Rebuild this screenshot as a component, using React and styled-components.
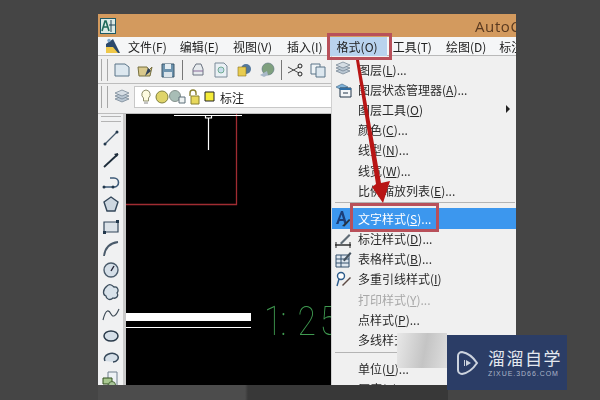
import React from 'react';
import styled, { createGlobalStyle } from 'styled-components';

const GlobalStyle = createGlobalStyle`
  html, body { margin: 0; padding: 0; background: #454545; }
  body { font-family: "Noto Sans CJK SC", "Liberation Sans", sans-serif; }
`;

const Page = styled.div`
  position: relative;
  width: 600px;
  height: 400px;
  overflow: hidden;
  background: #454545;
  padding: 14px 0 0 98px;
  box-sizing: border-box;
`;

const Win = styled.div`
  position: relative;
  width: 418px;
  height: 371px;
  display: flex;
  flex-direction: column;
  overflow: hidden;
  background: #f0f0f0;
  filter: blur(0.4px);
`;

const TitleBar = styled.div`
  height: 23px;
  flex: none;
  display: flex;
  align-items: center;
  background: #d39a5e;
  padding-left: 2px;
  white-space: nowrap;
`;

const TitleText = styled.div`
  margin-left: 359px;
  font: 15px "Open Sans", sans-serif;
  letter-spacing: 0.6px;
  color: #5a3a20;
`;

const MenuBar = styled.div`
  height: 19px;
  flex: none;
  display: flex;
  align-items: center;
  background: #f5f6f7;
  border-bottom: 1px solid #b9b9b9;
  box-sizing: border-box;
  padding-left: 7px;
  white-space: nowrap;
`;

const TopItem = styled.div`
  font-size: 12px;
  line-height: 19px;
  color: #222;
  margin-left: ${(p) => p.$gap}px;
  padding: 0 ${(p) => (p.$open ? '9px 0 7px' : '0')};
  background: ${(p) => (p.$open ? '#b9d3ee' : 'transparent')};
`;

const ToolRow = styled.div`
  height: ${(p) => p.$h}px;
  flex: none;
  display: flex;
  align-items: center;
  background: #f0f0f0;
  border-bottom: 1px solid #bdbdbd;
  padding-bottom: ${(p) => p.$pb || 0}px;
  box-sizing: border-box;
`;

const Grip = styled.div`
  width: 5px;
  height: 22px;
  margin: 0 4px 0 3px;
  border-left: 1px solid #a8a8a8;
  border-right: 1px solid #a8a8a8;
  flex: none;
`;

const ToolIcon = styled.div`
  width: ${(p) => p.$w || 23}px;
  height: 18px;
  flex: none;
  display: flex;
  align-items: center;
  justify-content: center;
`;

const Sep = styled.div`
  width: 1px;
  height: 20px;
  background: #777;
  margin: 0 ${(p) => p.$m || 5}px;
  flex: none;
`;

const LayerCombo = styled.div`
  flex: none;
  width: 198px;
  height: 22px;
  margin-left: 2px;
  background: #fff;
  border: 1px solid #c8c8c8;
  box-sizing: border-box;
  display: flex;
  align-items: center;
  padding-left: 6px;
  font-size: 12px;
  color: #222;
`;

const LayerName = styled.span`
  margin-left: 5px;
`;

const Body = styled.div`
  flex: 1;
  display: flex;
  min-height: 0;
`;

const LeftBar = styled.div`
  width: 25px;
  flex: none;
  background: #f0f1f2;
  border-right: 3px solid #c9c9c9;
  display: flex;
  flex-direction: column;
  align-items: center;
  padding-top: 2px;
  gap: 4px;
`;

const LeftGrip = styled.div`
  width: 20px;
  height: 4px;
  margin-bottom: 2px;
  border-top: 1px solid #b4b4b4;
  border-bottom: 1px solid #b4b4b4;
  flex: none;
`;

const LeftTool = styled.div`
  width: 18px;
  height: 18px;
  flex: none;
`;

const Canvas = styled.svg`
  flex: 1;
  display: block;
  background: #000;
  min-width: 0;
`;

const Menu = styled.div`
  position: absolute;
  left: 233px;
  top: 42px;
  width: 185px;
  height: 329px;
  background: #f0f0f0;
  border-left: 1px solid #d0d0d0;
  box-sizing: border-box;
  padding-top: 3px;
  overflow: hidden;
`;

const Row = styled.div`
  position: relative;
  height: 20.2px;
  flex: none;
  display: flex;
  align-items: center;
  padding-left: 26px;
  font-size: 12px;
  white-space: nowrap;
  color: ${(p) => (p.$active ? '#fff' : p.$off ? '#a8a8a8' : '#2a2a2a')};
  background: ${(p) => (p.$active ? '#3c97ee' : 'transparent')};
`;

const RowIcon = styled.svg`
  position: absolute;
  left: 3px;
  top: 2px;
  width: 17px;
  height: 17px;
`;

const Caret = styled.div`
  position: absolute;
  right: 6px;
  top: 6px;
  border-left: 4px solid #222;
  border-top: 4px solid transparent;
  border-bottom: 4px solid transparent;
`;

const Hr = styled.div`
  height: 1px;
  margin: ${(p) => p.$m};
  background: #b4b4b4;
`;

const Mark = styled.div`
  position: absolute;
  left: ${(p) => p.$x}px;
  top: ${(p) => p.$y}px;
  width: ${(p) => p.$w}px;
  height: ${(p) => p.$h}px;
  border: 3px solid #b8505a;
  box-sizing: border-box;
`;

const Arrow = styled.svg`
  position: absolute;
  left: 0;
  top: 0;
  width: 600px;
  height: 400px;
`;

const Fade = styled.div`
  position: absolute;
  left: 397px;
  top: 333px;
  width: 50px;
  height: 35px;
  background: linear-gradient(100deg, #e8e8e8, #c4c4c4 55%, #dedede);
`;

const Badge = styled.div`
  position: absolute;
  left: 447px;
  top: 335px;
  width: 120px;
  height: 55px;
  background: #2b3d66;
  display: flex;
  align-items: center;
  padding-left: 8px;
  box-sizing: border-box;
  gap: 7px;
  color: #e4e8ef;
`;

const BadgeText = styled.div`
  display: flex;
  flex-direction: column;
`;

const BadgeName = styled.div`
  font-size: 17px;
  line-height: 22px;
  font-weight: 400;
  letter-spacing: 1.5px;
  white-space: nowrap;
`;

const BadgeUrl = styled.div`
  font: 7px/9px "Liberation Sans", sans-serif;
  letter-spacing: 0.95px;
  color: #aab4c6;
  white-space: nowrap;
`;

const Foot = styled.div`
  position: absolute;
  left: 98px;
  top: 385px;
  width: 350px;
  height: 15px;
  background: linear-gradient(90deg, #4c4c4c 0 147px, #383838 150px);
`;

const Hot = styled.span`
  text-decoration: underline;
  text-underline-offset: 1px;
`;

const IconSvg = styled.svg`
  flex: none;
  display: block;
`;

const Svg = ({ children, w = 16, h = 16 }) => (
  <IconSvg width={w} height={h} viewBox={`0 0 ${w} ${h}`}>{children}</IconSvg>
);

const Layers = () => (
  <g fill="#b9c6d2" stroke="#6d7d8c" strokeWidth="0.7">
    <path d="M1 10l7-3 7 3-7 3z" />
    <path d="M1 7l7-3 7 3-7 3z" />
    <path d="M1 4l7-3 7 3-7 3z" fill="#d5dde4" />
  </g>
);

const top = [
  ['文件(F)', 7],
  ['编辑(E)', 13],
  ['视图(V)', 14],
  ['插入(I)', 15],
];

const leftIcons = [
  <g><path d="M3 15L15 3" stroke="#45596c" strokeWidth="1.300" /><circle cx="3" cy="15" r="1.500" fill="#22384c" /><circle cx="15" cy="3" r="1.500" fill="#22384c" /></g>,
  <g><path d="M2 16L16 3" stroke="#1d2c3a" strokeWidth="1.800" /><path d="M16 2l-4 1 3 3z" fill="#1d2c3a" /></g>,
  <g><path d="M2 14h10a4 4 0 0 0 0-9H8" stroke="#3d5a78" strokeWidth="1.600" fill="none" /><circle cx="2" cy="14" r="1.500" fill="#22384c" /><circle cx="11" cy="14" r="1.500" fill="#22384c" /></g>,
  <path d="M9 2l7 5-3 9H5L2 7z" stroke="#33475a" strokeWidth="1.400" fill="#cdd7e0" />,
  <g><path d="M2 5h14v10H2z" stroke="#33475a" strokeWidth="1.200" fill="#dbe2e8" /><rect x="14" y="3" width="3" height="3" fill="#22384c" /><rect x="1" y="14" width="3" height="3" fill="#22384c" /></g>,
  <path d="M2 17C3 9 8 4 16 3" stroke="#4a5b6b" strokeWidth="1.800" fill="none" />,
  <g><circle cx="9" cy="9" r="7" stroke="#4a5b6b" strokeWidth="1.400" fill="#d5dfe8" /><path d="M9 10l3-5" stroke="#223" strokeWidth="1.400" /></g>,
  <path d="M5 3c3-3 6 0 7 1 4-1 5 4 3 6 2 3-1 6-4 5-3 3-7 1-7-2-3-1-4-6 1-10z" stroke="#3a4c5c" strokeWidth="1.300" fill="#d8e2ea" />,
  <path d="M1 15C4 3 7 5 9 9s5 2 8-5" stroke="#3a4753" strokeWidth="1.100" fill="none" />,
  <ellipse cx="9" cy="9" rx="7" ry="5" stroke="#2a3b4b" strokeWidth="1.500" fill="#d5dfe8" />,
  <path d="M3 12C0 6 10 2 15 6c3 3 0 7-4 7" stroke="#35485a" strokeWidth="1.500" fill="#d5dfe8" />,
  <g><path d="M6 1h9v14H6z" fill="#eef2f5" stroke="#70808e" /><path d="M1 7h9v6H1z" fill="#a8c890" stroke="#33511f" /><circle cx="10" cy="14" r="3.500" fill="#a9c59a" stroke="#4c6a3c" /></g>,
];

const rows = [
  { label: '图层', hot: 'L', tail: '...', icon: <Layers /> },
  { label: '图层状态管理器', hot: 'A', tail: '...', icon: <g><path d="M1 6l6-3 6 3-6 3z" fill="#7fb2d8" stroke="#47708f" strokeWidth=".7" /><path d="M5 7h11v9H5z" fill="#f4f6f8" stroke="#22364a" /><path d="M5 7h11v2H5z" fill="#2f6da3" /><path d="M8 12h5" stroke="#22364a" /></g> },
  { label: '图层工具', hot: 'O', caret: true },
  { label: '颜色', hot: 'C', tail: '...' },
  { label: '线型', hot: 'N', tail: '...' },
  { label: '线宽', hot: 'W', tail: '...' },
  { label: '比例缩放列表', hot: 'E', tail: '...', hr: '2px 1px 5px 3px' },
  { label: '文字样式', hot: 'S', tail: '...', active: true, icon: <g><path d="M1 14L6 1h2l4 13H9.500l-1-3H4.500l-1 3zM5 9h3L6.600 4.500z" fill="#1c3f7a" /><path d="M7 16l7-7 1.500 1-6 6.500z" fill="#27343f" /></g> },
  { label: '标注样式', hot: 'D', tail: '...', icon: <g><path d="M0 14h16" stroke="#222" strokeWidth="1.400" /><path d="M1 11v6M15 11v6" stroke="#222" /><path d="M5 12l9-9 1.500 1.500-9 9z" fill="#5f6b75" /></g> },
  { label: '表格样式', hot: 'B', tail: '...', icon: <g><path d="M1 4h13v12H1z" fill="#dfe7ef" stroke="#34516d" /><path d="M1 8h13M1 12h13M6 4v12" stroke="#34516d" /><path d="M8 9l7-8 1.500 1.500-7 8z" fill="#44525e" /></g> },
  { label: '多重引线样式', hot: 'I', icon: <g><circle cx="6" cy="5" r="3.500" fill="#fff" stroke="#2b5a8a" strokeWidth="1.400" /><path d="M4 8L2 15" stroke="#2b5a8a" strokeWidth="1.400" /><path d="M7 14l8-8 1 1-8 8z" fill="#5c4a44" /></g> },
  { label: '打印样式', hot: 'Y', tail: '...', off: true },
  { label: '点样式', hot: 'P', tail: '...' },
  { label: '多线样式', hot: 'M', tail: '...', hr: '2px 1px 6px 3px' },
  { label: '单位', hot: 'U', tail: '...' },
  { label: '厚度', hot: 'T', icon: <path d="M2 12c2-5 10-5 13 0v5H2z" fill="#7e9fc2" /> },
];

export default function App() {
  return (
    <Page>
      <GlobalStyle />
      <Win>
        <TitleBar>
          <Svg>
            <rect x=".5" y=".5" width="15" height="15" fill="#dcebe6" stroke="#1d5a66" />
            <path d="M2 13L5 3h1l3 10M3.500 9h4" stroke="#1e6a5a" strokeWidth="1.600" fill="none" />
            <path d="M11 2v12M9 7h6" stroke="#245" />
          </Svg>
          <TitleText>AutoCAD 2014</TitleText>
        </TitleBar>
        <MenuBar>
          <Svg>
            <path d="M1 6L8 1l7 14H1z" fill="#2c4a6c" />
            <path d="M1 9h7l5 6H1z" fill="#efc84a" />
            <circle cx="4" cy="2.500" r="1.700" fill="#7fa8cc" />
          </Svg>
          {top.map(([t, gap]) => (
            <TopItem key={t} $gap={gap}>{t}</TopItem>
          ))}
          <TopItem $gap={7} $open>格式(O)</TopItem>
          <TopItem $gap={6}>工具(T)</TopItem>
          <TopItem $gap={14}>绘图(D)</TopItem>
          <TopItem $gap={13}>标注(N)</TopItem>
        </MenuBar>
        <ToolRow $h={28}>
          <Grip />
          <ToolIcon $w={20}><Svg><path d="M1 2h10l4 3v9H1z" fill="#dce7ef" stroke="#5a7488" /></Svg></ToolIcon>
          <ToolIcon $w={26}><Svg><path d="M1 5h9l2 3 3-3-2 9H2z" fill="#d9c98d" stroke="#77703f" /><path d="M8 14l3-8 3 3z" fill="#30425a" /></Svg></ToolIcon>
          <ToolIcon $w={20}><Svg><path d="M2 2h12v13H2z" fill="#6d93ae" stroke="#3d586c" /><path d="M5 2h6v5H5z" fill="#e4edf2" /><path d="M4 10h8v5H4z" fill="#dbe4ea" /></Svg></ToolIcon>
          <Sep $m={4} />
          <ToolIcon $w={21}><Svg><path d="M3 7l3-5h5l2 5v6H3z" fill="#e6eaed" stroke="#6a7280" /><path d="M3 9h10" stroke="#8a6a9a" /></Svg></ToolIcon>
          <ToolIcon $w={25}><Svg><path d="M2 1h9l3 3v11H2z" fill="#eaf0f5" stroke="#7a8a98" /><circle cx="8" cy="8" r="3" fill="#c8dcec" stroke="#385" strokeWidth=".6" /></Svg></ToolIcon>
          <ToolIcon $w={21}><Svg><circle cx="10" cy="7" r="5" fill="#54789c" /><path d="M2 5h8v9H2z" fill="#e8cc50" stroke="#8a7420" strokeWidth=".6" /></Svg></ToolIcon>
          <ToolIcon $w={25}><Svg><circle cx="9" cy="7" r="6" fill="#7fa07e" stroke="#58707e" strokeWidth=".6" /><path d="M1 13l7-4 1 4-4 2z" fill="#a8b8c8" /></Svg></ToolIcon>
          <Sep $m={2} />
          <ToolIcon $w={22}><Svg><path d="M1 5l11 6M1 11l11-6" stroke="#4a4a4a" /><circle cx="13" cy="4" r="2" fill="none" stroke="#222" /><circle cx="13" cy="12" r="2" fill="none" stroke="#222" /></Svg></ToolIcon>
          <ToolIcon $w={24}><Svg><path d="M1 2h9v10H1z" fill="#eef3f6" stroke="#5a7488" /><path d="M6 5h9v10H6z" fill="#dce7ef" stroke="#5a7488" /></Svg></ToolIcon>
        </ToolRow>
        <ToolRow $h={30} $pb={3}>
          <Grip />
          <ToolIcon $w={20}><Svg><Layers /></Svg></ToolIcon>
          <LayerCombo>
            <Svg w={14}><path d="M5 1a4.500 4.500 0 0 1 2.500 8v3h-5V9A4.500 4.500 0 0 1 5 1z" fill="#fdfbe0" stroke="#8d8d6a" /><path d="M3 14h4" stroke="#888" /></Svg>
            <Svg w={14}><circle cx="7" cy="8" r="6" fill="#dfd46a" stroke="#80803c" /></Svg>
            <Svg w={18}><circle cx="6" cy="7" r="5.500" fill="#a8bdb6" stroke="#86928e" /><path d="M10 8h6v6h-6z" fill="#eef2f2" stroke="#5d6f78" /></Svg>
            <Svg w={17}><path d="M3 7V4a3 3 0 0 1 6 0v2" fill="none" stroke="#8a8230" strokeWidth="1.400" /><path d="M4 7h8v8H4z" fill="#e8d85c" stroke="#8a8230" /></Svg>
            <Svg w={11}><path d="M1 3h9v9H1z" fill="#f5ec3a" stroke="#222" /></Svg>
            <LayerName>标注</LayerName>
          </LayerCombo>
        </ToolRow>
        <Body>
          <LeftBar>
            <LeftGrip />
            {leftIcons.map((d, i) => (
              <LeftTool key={i}><svg width="18" height="18" viewBox="0 0 18 18">{d}</svg></LeftTool>
            ))}
          </LeftBar>
          <Canvas viewBox="0 0 390 271" preserveAspectRatio="xMinYMin">
            <path d="M110.500 0v90.500H0" stroke="#a02c32" strokeWidth="1.300" fill="none" />
            <path d="M48 1.500h68M82.500 4v32M79.500 1.500v2.500h6v-2.500" stroke="#fff" strokeWidth="1.200" fill="none" />
            <rect y="199" width="125" height="8" fill="#fff" />
            <rect y="213" width="125" height="1" fill="#fff" />
            <text transform="translate(138 221) scale(.82 1)" x="0 20 41 68" fontFamily="Roboto, sans-serif" fontWeight="100" fontSize="41" fill="#3f9a50">1:25</text>
          </Canvas>
        </Body>
        <Menu>
          {rows.map((r) => (
            <React.Fragment key={r.label}>
              <Row $active={r.active} $off={r.off}>
                {r.icon && <RowIcon viewBox="0 0 17 17">{r.icon}</RowIcon>}
                {r.label}(<Hot>{r.hot}</Hot>){r.tail}
                {r.caret && <Caret />}
              </Row>
              {r.hr && <Hr $m={r.hr} />}
            </React.Fragment>
          ))}
        </Menu>
      </Win>
      <Foot />
      <Mark $x={327} $y={33} $w={65} $h={27} />
      <Mark $x={350} $y={203} $w={89} $h={29} />
      <Arrow viewBox="0 0 600 400">
        <path d="M356 60h3l22 123 9-2-7 22-11-16 4-3z" fill="#b81515" />
      </Arrow>
      <Fade />
      <Badge>
        <svg width="26" height="34" viewBox="0 0 26 34">
          <path d="M7 6a4 4 0 0 0-4 4v14a4 4 0 0 0 4 4c6-1 11-5 15-11C18 11 13 7 7 6z" fill="none" stroke="#ccd3de" strokeWidth="2" />
          <path d="M11 14l5 3-5 3zM9 14h1v6H9z" fill="#ccd3de" />
        </svg>
        <BadgeText>
          <BadgeName>溜溜自学</BadgeName>
          <BadgeUrl>ZIXUE.3D66.COM</BadgeUrl>
        </BadgeText>
      </Badge>
    </Page>
  );
}
